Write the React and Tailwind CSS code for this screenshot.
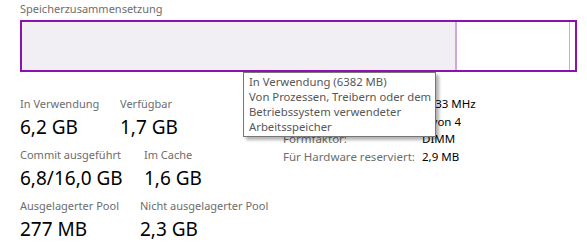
export default function App() {
  const font = { fontFamily: '"Noto Sans", "Open Sans", sans-serif' };
  const Stat = ({ label, value, w }) => (
    <div className={"flex flex-col whitespace-nowrap " + (w || "")}>
      <div className="text-[11px] leading-[16px] text-[#6d6d6d]">{label}</div>
      <div className="text-[19px] leading-[26px] text-black mt-[2px]">{value}</div>
    </div>
  );
  return (
    <div className="w-[587px] h-[247px] bg-white relative overflow-hidden" style={font}>
      <div className="pl-[20px] pr-[10px] pt-[1px]">
        <div className="text-[11px] leading-[16px] text-[#6d6d6d] whitespace-nowrap">Speicherzusammensetzung</div>
        <div className="mt-[3px] h-[52px] border-2 border-[#8b12ae] flex">
          <div className="w-[433px] bg-[#f1eff3]"></div>
          <div className="w-[2px] bg-[#cfa9dc]"></div>
          <div className="w-[112px] bg-white"></div>
          <div className="w-[1px] bg-[#cfa9dc]"></div>
          <div className="flex-1 bg-white"></div>
        </div>
        <div className="flex items-start mt-[24px]">
          <div className="w-[263px] shrink-0 flex flex-col gap-[7px]">
            <div className="flex">
              <Stat label="In Verwendung" value="6,2 GB" w="w-[100px]" />
              <Stat label="Verfügbar" value="1,7 GB" />
            </div>
            <div className="flex">
              <Stat label="Commit ausgeführt" value="6,8/16,0 GB" w="w-[124px]" />
              <Stat label="Im Cache" value="1,6 GB" />
            </div>
            <div className="flex">
              <Stat label="Ausgelagerter Pool" value="277 MB" w="w-[120px]" />
              <Stat label="Nicht ausgelagerter Pool" value="2,3 GB" />
            </div>
          </div>
          <div className="grid grid-cols-[139px_1fr] content-start text-[11.5px] leading-[17.7px] whitespace-nowrap mt-[-1px]">
            <div className="text-[#6d6d6d]">Geschwindigkeit:</div>
            <div className="text-black">1333 MHz</div>
            <div className="text-[#6d6d6d]">Verwendete Steckplätze:</div>
            <div className="text-black">2 von 4</div>
            <div className="text-[#6d6d6d]">Formfaktor:</div>
            <div className="text-black">DIMM</div>
            <div className="text-[#6d6d6d]">Für Hardware reserviert:</div>
            <div className="text-black">2,9 MB</div>
          </div>
        </div>
      </div>
      <div className="absolute left-[243px] top-[72px] w-[193px] h-[65px] bg-white border border-[#767676] shadow-[3px_3px_3px_rgba(0,0,0,0.3)] px-[5px] pt-[1px] text-[11.3px] leading-[15px] text-[#575757] whitespace-nowrap">
        <div>In Verwendung (6382 MB)</div>
        <div>Von Prozessen, Treibern oder dem</div>
        <div>Betriebssystem verwendeter</div>
        <div>Arbeitsspeicher</div>
      </div>
    </div>
  );
}
